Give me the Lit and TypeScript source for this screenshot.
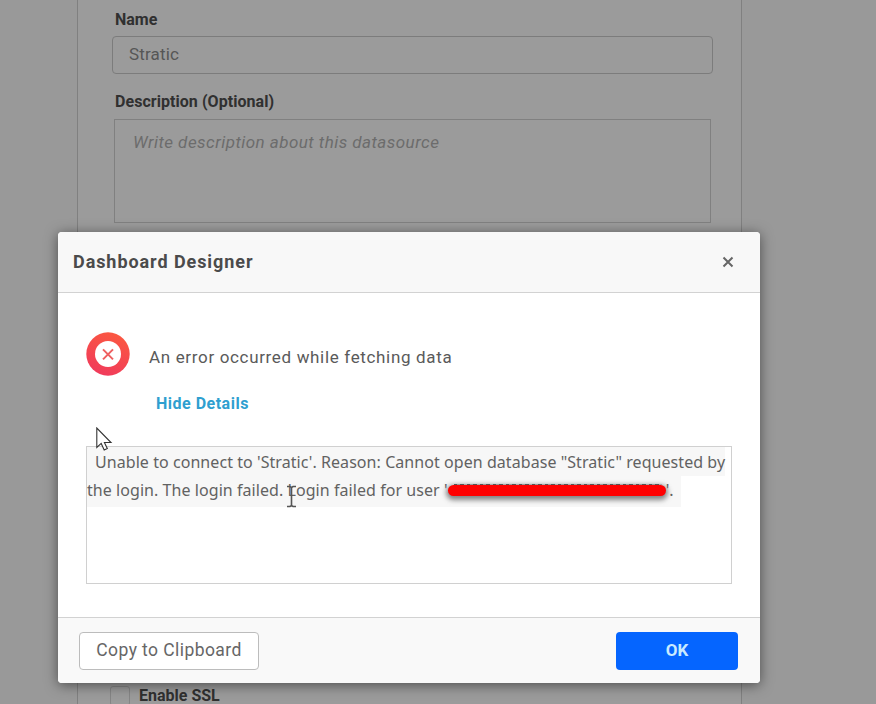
import { LitElement, html, css } from "lit";
import { customElement } from "lit/decorators.js";

@customElement("datasource-form")
class DatasourceForm extends LitElement {
  static styles = css`
    :host { display: block; height: 704px; background: #999; }
    .panel {
      box-sizing: border-box; width: 665px; height: 704px; margin-left: 77px;
      padding: 10px 29px 0 34px; border: solid #808080; border-width: 0 1px;
      background: #9b9b9b; color: #303030; overflow: hidden;
      display: flex; flex-direction: column;
    }
    .label { font-size: 16px; line-height: 20px; font-weight: 700; padding-left: 3px; white-space: nowrap; }
    .l2 { letter-spacing: 0.05px; margin-top: 18px; }
    .input {
      box-sizing: border-box; flex: none; height: 38px; width: 601px; margin-top: 6px; padding-left: 16px;
      border: 1px solid #7c7c7c; border-radius: 4px; font-size: 17px; line-height: 35px;
      color: #565656; letter-spacing: 0.15px;
    }
    .area {
      box-sizing: border-box; flex: none; height: 104px; width: 597px; margin: 7px 0 0 2px; padding: 12px 18px;
      border: 1px solid #808080; font-size: 17px; line-height: 20px; font-style: italic;
      color: #6c6c6c; letter-spacing: 0.46px; white-space: nowrap;
    }
    .check { display: flex; gap: 9px; margin-top: 463px; }
    .box { box-sizing: border-box; width: 20px; height: 20px; border: 1px solid #858585; border-radius: 3px; margin: 0 0 0 -2px; }
    .cl { padding: 0; line-height: 18px; padding-top: 1px; }
  `;
  render() {
    return html`<div class="panel">
      <div class="label">Name</div>
      <div class="input">Stratic</div>
      <div class="label l2">Description (Optional)</div>
      <div class="area">Write description about this datasource</div>
      <div class="check"><span class="box"></span><span class="label cl">Enable SSL</span></div>
    </div>`;
  }
}

@customElement("error-dialog")
class ErrorDialog extends LitElement {
  static styles = css`
    :host {
      box-sizing: border-box; display: flex; flex-direction: column; width: 702px; height: 451px;
      background: #fff; border-radius: 4px; overflow: hidden; color: #5a5a5a;
      box-shadow: 0 2px 13px rgba(0, 0, 0, 0.5);
    }
    .head {
      box-sizing: border-box; height: 61px; flex: none; display: flex; align-items: center; justify-content: space-between;
      padding: 0 26px 1px 15px; background: #f8f8f8; border-bottom: 1px solid #d2d2d2;
    }
    .title { font-size: 18px; font-weight: 700; color: #4b4b4b; letter-spacing: 0.93px; white-space: nowrap; }
    .close { width: 12px; height: 12px; margin-top: 1px; }
    .body { flex: 1; padding: 39px 28px 0; }
    .row { display: flex; gap: 19px; }
    .icon { width: 44px; height: 44px; flex: none; }
    .msg { font-size: 17px; line-height: 24px; padding-top: 13px; letter-spacing: 0.66px; white-space: nowrap; }
    .link { margin: 17px 0 0 70px; font-size: 16px; line-height: 22px; font-weight: 700; color: #2f9fd0; letter-spacing: 0.5px; }
    .details {
      box-sizing: border-box; width: 646px; height: 138px; margin-top: 31px; border: 1px solid #d0d0d0;
      font: 16px/28px "Noto Sans", sans-serif; letter-spacing: 0.06px; color: #626262;
    }
    .line { display: flex; white-space: pre; width: max-content; height: 28px; background: #f7f7f7; }
    .first { padding: 1px 6px 0 8px; width: 638px; box-sizing: border-box; height: 29px; }
    .second { padding-right: 7px; height: 31px; }
    .redact {
      width: 218px; height: 11px; margin-top: 9px; border-radius: 6px; background: #f00;
      box-shadow: 0 2px 5px 2px rgba(70, 70, 70, 0.65); position: relative;
    }
    .redact::before {
      content: ""; position: absolute; left: 6px; right: 4px; top: -1px; height: 1px;
      background: repeating-linear-gradient(90deg, #555 0 3px, #999 3px 6px, #555 6px 10px, #aaa 10px 13px);
    }
    .foot {
      box-sizing: border-box; height: 66px; flex: none; display: flex; justify-content: space-between;
      padding: 14px 22px 0 21px; background: #f9f9f9; border-top: 1px solid #d2d2d2;
    }
    .btn { box-sizing: border-box; height: 38px; border-radius: 4px; font-size: 18px; line-height: 35px; text-align: center; white-space: nowrap; }
    .copy { width: 180px; border: 1px solid #bcbcbc; background: #fff; color: #666; font-size: 17.5px; letter-spacing: 0.42px; }
    .ok { width: 122px; background: #0565ff; color: #c9eaff; font-size: 17px; font-weight: 700; line-height: 37px; }
  `;
  render() {
    return html`
      <div class="head">
        <span class="title">Dashboard Designer</span>
        <svg class="close" viewBox="0 0 12 12"><path d="M1.5 1.5 10.5 10.5M10.5 1.5 1.5 10.5" stroke="#666" stroke-width="2" /></svg>
      </div>
      <div class="body">
        <div class="row">
          <svg class="icon" viewBox="0 0 44 44">
            <defs><linearGradient id="g" x1=".7" y1="0" x2=".3" y2="1"><stop offset="0" stop-color="#fb5840" /><stop offset="1" stop-color="#f03a5c" /></linearGradient></defs>
            <circle cx="22" cy="22" r="21.7" fill="url(#g)" />
            <circle cx="22" cy="22" r="13" fill="#fff" />
            <path d="M17 17.4 27 27.4M27 17.4 17 27.4" stroke="#ee5f60" stroke-width="2" />
          </svg>
          <span class="msg">An error occurred while fetching data</span>
        </div>
        <div class="link">Hide Details</div>
        <div class="details">
          <div class="line first"><span>Unable to connect to 'Stratic'. Reason: Cannot open database "Stratic" requested by</span></div>
          <div class="line second"><span>the login. The login failed. Login failed for user '</span><span class="redact"></span><span>'.</span></div>
        </div>
      </div>
      <div class="foot">
        <div class="btn copy">Copy to Clipboard</div>
        <div class="btn ok">OK</div>
      </div>`;
  }
}

@customElement("app-root")
class AppRoot extends LitElement {
  static styles = css`
    :host { display: block; position: relative; width: 876px; height: 704px; overflow: hidden; font-family: Roboto, sans-serif; }
    .dialog { position: absolute; left: 58px; top: 232px; }
    .arrow { position: absolute; left: 96px; top: 427px; width: 17px; height: 25px; }
    .beam { position: absolute; left: 286px; top: 485px; width: 11px; height: 23px; }
  `;
  render() {
    return html`
      <datasource-form></datasource-form>
      <error-dialog class="dialog"></error-dialog>
      <svg class="arrow" viewBox="0 0 17 25"><path d="M.8 1V20.5L5.2 16.4 8.2 23 11.3 21.6 8.4 15.5H15z" fill="#fff" stroke="#333" stroke-width="1.1" /></svg>
      <svg class="beam" viewBox="0 0 11 23"><path d="M1 1.5H4L5.5 2.5 7 1.5H10M5.5 2V21M1 21.5H4L5.5 20.5 7 21.5H10" fill="none" stroke="#555" stroke-width="1.6" /></svg>`;
  }
}
